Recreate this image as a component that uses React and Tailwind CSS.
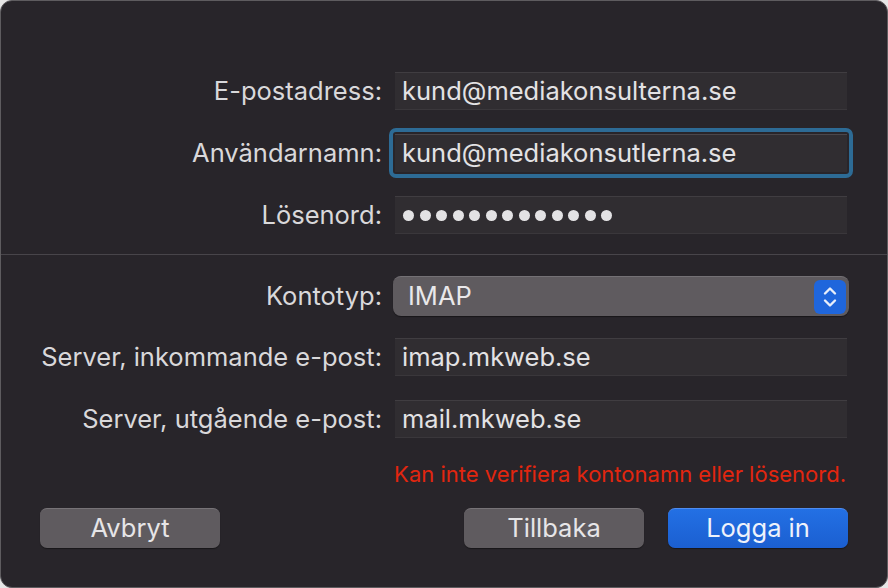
const font = { fontFamily: 'Inter, "Liberation Sans", sans-serif' };

function Label({ children }) {
  return <div className="text-right text-[25.5px] leading-none text-[#d9d8da] pr-[13px]">{children}</div>;
}

function Field({ children, focused }) {
  if (focused) {
    return (
      <div className="-m-[6px] rounded-[7px] border-[4px] border-[#2d6b95] p-[2px]">
        <div className="flex h-[38px] items-center border-t border-[#4a474b] bg-[#302d31] px-[7px] text-[25.5px] text-[#e3e2e4]">
          {children}
        </div>
      </div>
    );
  }
  return (
    <div className="flex h-[38px] items-center border-t border-[#403d41] border-b border-b-[#3a373b] bg-[#302d31] px-[7px] text-[25.5px] text-[#e3e2e4]">
      {children}
    </div>
  );
}

function Row({ label, children }) {
  return (
    <div className="grid grid-cols-[394px_452px] items-center">
      <Label>{label}</Label>
      {children}
    </div>
  );
}

function Stepper() {
  return (
    <div className="flex h-[34px] w-[32px] items-center justify-center rounded-[6px] bg-[#1f66dc]">
      <svg width="16" height="24" viewBox="0 0 16 24" fill="none" stroke="#e8eefa" strokeWidth="2.4" strokeLinecap="round" strokeLinejoin="round">
        <path d="M3 8.5 L8 3.5 L13 8.5" />
        <path d="M3 15.5 L8 20.5 L13 15.5" />
      </svg>
    </div>
  );
}

export default function App() {
  return (
    <div className="h-[588px] w-[888px] bg-[#e6e6e6]" style={font}>
      <div className="flex h-full w-full flex-col overflow-hidden rounded-[12px] border border-[#5e5c5f] bg-[#28252a] pt-[71px]">
        <div className="flex flex-col gap-[24px]">
          <Row label="E-postadress:">
            <Field>kund@mediakonsulterna.se</Field>
          </Row>
          <Row label="Användarnamn:">
            <Field focused>kund@mediakonsutlerna.se</Field>
          </Row>
          <Row label="Lösenord:">
            <Field>
              <div className="flex gap-[5.5px] pl-[1px]">
                {Array.from({ length: 13 }).map((_, i) => (
                  <span key={i} className="h-[11px] w-[11px] rounded-full bg-[#e3e2e4]" />
                ))}
              </div>
            </Field>
          </Row>
        </div>

        <div className="mb-[21px] mt-[20px] h-px bg-[#48454a]" />

        <div className="flex flex-col gap-[22px]">
          <Row label="Kontotyp:">
            <div className="-mx-[2px] flex h-[40px] items-center justify-between rounded-[8px] border-t border-[#747175] bg-[#5f5b5f] pl-[15px] pr-[3px] text-[25.5px] text-[#e9e8ea] shadow-[0_1px_1px_rgba(0,0,0,0.4)]">
              <span>IMAP</span>
              <Stepper />
            </div>
          </Row>
          <div className="flex flex-col gap-[24px]">
            <Row label="Server, inkommande e-post:">
              <Field>imap.mkweb.se</Field>
            </Row>
            <Row label="Server, utgående e-post:">
              <Field>mail.mkweb.se</Field>
            </Row>
          </div>
        </div>

        <div className="mt-[22px] flex h-[28px] items-center justify-end pr-[41px] text-[22px] text-[#e2260f]">
          Kan inte verifiera kontonamn eller lösenord.
        </div>

        <div className="mt-[20px] flex items-center px-[39px] text-[25.5px] text-[#e6e5e7]">
          <button className="flex h-[40px] w-[180px] items-center justify-center rounded-[7px] border-t border-[#777377] bg-[#5f5b5f] shadow-[0_1px_1px_rgba(0,0,0,0.4)]">
            Avbryt
          </button>
          <div className="flex-1" />
          <button className="flex h-[40px] w-[180px] items-center justify-center rounded-[7px] border-t border-[#777377] bg-[#5f5b5f] shadow-[0_1px_1px_rgba(0,0,0,0.4)]">
            Tillbaka
          </button>
          <button className="ml-[24px] flex h-[40px] w-[180px] items-center justify-center rounded-[7px] border-t border-[#4f8cf0] bg-gradient-to-b from-[#2370e4] to-[#1b5fd1] text-[#eef2fb] shadow-[0_1px_1px_rgba(0,0,0,0.4)]">
            Logga in
          </button>
        </div>
      </div>
    </div>
  );
}
